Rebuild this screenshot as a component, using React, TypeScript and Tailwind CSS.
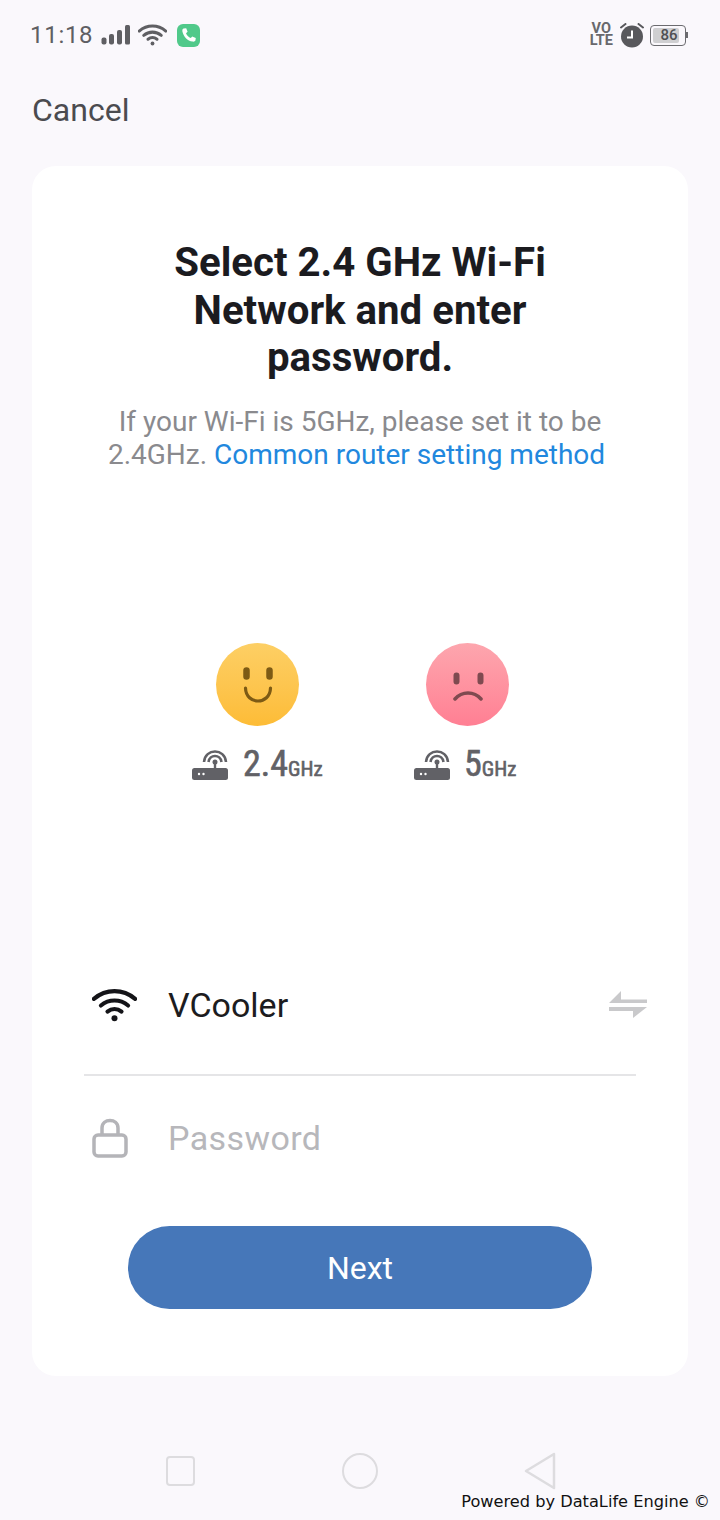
import React from 'react';

const WifiIcon = ({ className, thick }: { className: string; thick: number }) => (
  <svg className={className} viewBox="0 0 48 36" fill="none" stroke="currentColor" strokeLinecap="round" strokeWidth={thick}>
    <path d="M2 11.5C15 0.5 33 0.5 46 11.5" />
    <path d="M9.5 18.5C18 11.5 30 11.5 38.5 18.5" />
    <path d="M16.5 25C21 21.5 27 21.5 31.5 25" />
    <circle cx="24" cy="32" r="3.2" fill="currentColor" stroke="none" />
  </svg>
);

const RouterIcon = () => (
  <svg className="w-9 h-[31px] mb-[2px] text-[#616166]" viewBox="0 0 36 31" fill="none" stroke="currentColor">
    <path d="M12 13C13 -1 33 -1 34 13" strokeWidth="2.6" />
    <path d="M16.5 13C17.5 5 28.5 5 29.5 13" strokeWidth="2.6" />
    <circle cx="23" cy="13" r="2.5" fill="currentColor" stroke="none" />
    <path d="M21.8 13h2.4v7h-2.4z" fill="currentColor" stroke="none" />
    <rect x="0" y="19" width="36" height="12" rx="2.5" fill="currentColor" stroke="none" />
    <circle cx="7" cy="25" r="1.2" fill="#fff" stroke="none" />
    <circle cx="11.5" cy="25" r="1.2" fill="#fff" stroke="none" />
  </svg>
);

const Band = ({ value, gap }: { value: string; gap: string }) => (
  <div className={`flex items-end ${gap} text-[#616166]`}>
    <RouterIcon />
    <div className="flex items-baseline font-['Roboto_Condensed','Roboto',sans-serif] leading-none [-webkit-text-stroke:0.6px_#616166]">
      <span className="text-[36px] font-normal">{value}</span>
      <span className="text-[21px] font-normal">GHz</span>
    </div>
  </div>
);

function StatusBar() {
  return (
    <div className="h-[70px] pl-[30px] pr-[32px] flex items-center justify-between">
      <div className="flex items-center">
        <span className="text-[24px] leading-none tracking-[0.7px] text-[#5f5f63]">11:18</span>
        <svg className="ml-[8px] w-[30px] h-[20px] text-[#5f5f63]" viewBox="0 0 30 20" fill="currentColor">
          <rect x="0.5" y="12.5" width="5" height="7" rx="2" />
          <rect x="8" y="9" width="5" height="10.5" rx="2" />
          <rect x="16" y="5" width="5" height="14.5" rx="2" />
          <rect x="24" y="0" width="5" height="19.5" rx="1.5" />
        </svg>
        <WifiIcon thick={5} className="ml-[7px] w-[29px] h-[22px] text-[#5f5f63]" />
        <div className="ml-[10px] w-[23px] h-[23px] rounded-[6px] bg-[#50c98a] flex items-center justify-center">
          <svg className="w-[16px] h-[16px]" viewBox="0 0 16 16" fill="#fff">
            <path d="M2.5 1.5L5.2 1.2L6.6 4.8L5 6.2C5.8 8.2 7.5 10 9.8 11L11.2 9.4L14.8 11L14.4 13.6C14 14.6 12.8 14.8 11.5 14.6C6.5 13.6 2.4 9.5 1.4 4.4C1.2 3 1.5 2 2.5 1.5Z" />
          </svg>
        </div>
      </div>
      <div className="flex items-center">
        <div className="flex flex-col items-center font-['Roboto',sans-serif] font-bold text-[14.5px] leading-[12px] text-[#68686c]">
          <span>VO</span>
          <span>LTE</span>
        </div>
        <svg className="ml-[7px] w-[24px] h-[25px] text-[#58585c]" viewBox="0 0 24 25">
          <circle cx="12" cy="13.5" r="11" fill="currentColor" />
          <path d="M12 7.5V14.5H7" stroke="#fff" strokeWidth="2" fill="none" />
          <path d="M1 4.5L5.5 1M23 4.5L18.5 1" stroke="currentColor" strokeWidth="2" strokeLinecap="round" />
        </svg>
        <div className="ml-[6px] flex items-center">
          <div className="w-[36px] h-[21px] rounded-[4px] border-[1.5px] border-[#6b6b6f] p-[2px] flex">
            <div className="w-[26px] rounded-[2px] bg-[#cfcfd1] flex items-center justify-center">
              <span className="text-[15px] leading-none font-medium text-[#4f4f53] pl-[6px]">86</span>
            </div>
          </div>
          <div className="w-[2px] h-[6px] bg-[#6b6b6f]" />
        </div>
      </div>
    </div>
  );
}

function NavBar() {
  return (
    <div className="relative flex-1">
      <div className="pt-[76px] pl-[166px] flex items-center text-[#dddcdf]">
        <div className="w-[29px] h-[30px] rounded-[4px] border-[2.5px] border-current" />
        <div className="ml-[147px] w-[36px] h-[36px] rounded-full border-[2.5px] border-current" />
        <svg className="ml-[146px] w-[34px] h-[38px]" viewBox="0 0 34 38" fill="none" stroke="currentColor" strokeWidth="2.5" strokeLinejoin="round">
          <path d="M30 2L2 19L30 36Z" />
        </svg>
      </div>
      <span className="absolute right-[10px] bottom-[10px] font-['DejaVu_Sans',sans-serif] text-[16.2px] leading-none text-[#111]">
        Powered by DataLife Engine ©
      </span>
    </div>
  );
}

export default function App() {
  return (
    <div className="w-[720px] h-[1520px] bg-[#faf8fc] flex flex-col overflow-hidden font-['Roboto','Noto_Sans',sans-serif]">
      <StatusBar />
      <div className="pl-[32px] pt-[18px] text-[32px] leading-[44px] text-[#4b4b4f]">Cancel</div>

      <div className="mx-[32px] mt-[34px] h-[1210px] shrink-0 bg-white rounded-[24px] flex flex-col">
        <h1 className="mt-[73px] mx-[120px] text-center font-bold text-[#1b1b1f] text-[40.2px] leading-[47.5px]">
          Select 2.4 GHz Wi-Fi Network and enter password.
        </h1>
        <p className="mt-[23px] mx-[60px] text-center text-[28px] leading-[33px] text-[#8a8a8e]">
          If your Wi-Fi is 5GHz, please set it to be 2.4GHz.{' '}
          <span className="text-[#2188de]">Common router setting method</span>{'\u00a0'}
        </p>

        <div className="mt-[172px] pl-[160px] flex items-start">
          <div className="flex flex-col items-start w-[222px]">
            <div className="ml-[24px] w-[83px] h-[83px] rounded-full bg-gradient-to-b from-[#fdcf64] to-[#fdbc36] flex items-center justify-center">
              <svg className="w-[34px] h-[38px] text-[#7d5a14]" viewBox="0 0 34 38" fill="none" stroke="currentColor" strokeLinecap="round">
                <path d="M5.5 5.5V11.5M28.5 5.5V11.5" strokeWidth="6.5" />
                <path d="M4.5 23C5 40.3 29 40.3 29.5 23" strokeWidth="3.2" />
              </svg>
            </div>
            <div className="mt-[20px]"><Band value="2.4" gap="gap-[15px]" /></div>
          </div>
          <div className="flex flex-col items-start">
            <div className="ml-[12px] w-[83px] h-[83px] rounded-full bg-gradient-to-b from-[#fda6ae] to-[#ff7f93] flex items-center justify-center">
              <svg className="w-[36px] h-[34px] text-[#7f4a50]" viewBox="0 0 36 34" fill="none" stroke="currentColor" strokeLinecap="round">
                <path d="M6.5 8.5V14.5M30.5 8.5V14.5" strokeWidth="6" />
                <path d="M5 32C12 24 24 24 31 32" strokeWidth="3.5" />
              </svg>
            </div>
            <div className="mt-[20px]"><Band value="5" gap="gap-[14px]" /></div>
          </div>
        </div>

        <div className="mt-[191px] mx-[52px]">
          <div className="h-[103px] pb-[36px] flex items-center border-b-2 border-[#e5e5e7]">
            <WifiIcon thick={4.4} className="ml-[8px] w-[45px] h-[34px] text-[#141418]" />
            <span className="ml-[31px] text-[34px] leading-none text-[#1c1c20]">VCooler</span>
            <svg className="ml-auto mr-[-11px] mb-[2px] w-[38px] h-[27px] text-[#c9c9cb]" viewBox="0 0 38 27" fill="currentColor">
              <path d="M12 0V8.5H38V12H0Z" />
              <path d="M0 16H38L24 27V20H0Z" />
            </svg>
          </div>
          <div className="h-[125px] flex items-center">
            <svg className="ml-[8px] w-[36px] h-[40px] text-[#b4b4b8]" viewBox="0 0 36 40" fill="none" stroke="currentColor" strokeWidth="3.5">
              <rect x="2" y="17" width="32" height="21" rx="4" />
              <path d="M10 17V10C10 0 26 0 26 10V17" />
            </svg>
            <span className="ml-[40px] text-[34px] leading-none tracking-[0.4px] text-[#b7b7bb]">Password</span>
          </div>
          <button className="mx-[44px] mt-[25px] pt-[2px] w-[464px] h-[83px] rounded-full bg-[#4677b9] text-white text-[32px]">
            Next
          </button>
        </div>
      </div>

      <NavBar />
    </div>
  );
}
